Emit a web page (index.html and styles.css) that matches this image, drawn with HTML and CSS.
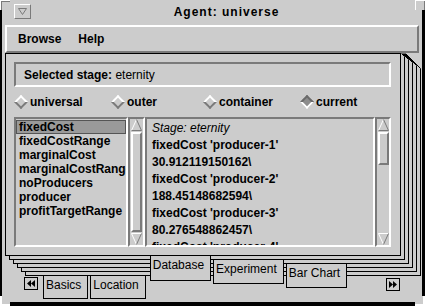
FILE: index.html
```html
<!DOCTYPE html>
<html lang="en">

<head>
    <meta charset="UTF-8">
    <meta name="viewport" content="width=device-width, initial-scale=1.0">
    <title>Agent: universe</title>
    <link rel="stylesheet" href="styles.css">
</head>

<body>

    <div class="window">
        <span class="corner corner-tl"></span>
        <span class="corner corner-tr"></span>
        <span class="corner corner-bl"></span>
        <span class="corner corner-br"></span>

        <div class="titlebar">
            <span class="win-button">
                <svg width="9" height="7" viewBox="0 0 9 7"><path d="M0.5 0.5 H8.5 L4.5 6.5 Z" fill="none" stroke="#7a7a7a"/></svg>
            </span>
            <span class="title">Agent: universe</span>
        </div>

        <div class="menubar">
            <span>Browse</span>
            <span>Help</span>
        </div>

        <div class="page">
            <!-- fanned corner of the pages stacked behind -->
            <svg class="page-fan" width="22" height="26" viewBox="0 0 22 26">
                <rect x="1" y="0" width="21" height="26" fill="#ccc"/>
                <path d="M0.5 0 V26" stroke="#000"/>
                <path d="M1.5 0.5 L4.5 3.5 V26 M2.5 0.5 L8.5 6.5 V26 M3.5 0.5 L12.5 9.5 V26 M4.5 0.5 L16.5 12.5 V26 M5.5 0.5 L20.5 15.5 V26" fill="none" stroke="#000"/>
            </svg>

            <div class="stage"><b>Selected stage:</b>&nbsp;eternity</div>

            <div class="radios">
                <label class="radio"><span class="diamond"></span>universal</label>
                <label class="radio"><span class="diamond"></span>outer</label>
                <label class="radio"><span class="diamond"></span>container</label>
                <label class="radio"><span class="diamond checked"></span>current</label>
            </div>

            <div class="panes">
                <ul class="list">
                    <li class="selected">fixedCost</li>
                    <li>fixedCostRange</li>
                    <li>marginalCost</li>
                    <li>marginalCostRange</li>
                    <li>noProducers</li>
                    <li>producer</li>
                    <li>profitTargetRange</li>
                </ul>
                <div class="scrollbar">
                    <svg class="arrow" width="11" height="12" viewBox="0 0 11 12"><path d="M5.5 0.5 L0.5 11.5" stroke="#fff"/><path d="M5.5 0.5 L10.5 11.5 H0.5" fill="none" stroke="#7a7a7a"/></svg>
                    <div class="slider slider-full"></div>
                    <svg class="arrow" width="11" height="12" viewBox="0 0 11 12"><path d="M0.5 0.5 H10.5 M0.5 0.5 L5.5 11.5" stroke="#fff" fill="none"/><path d="M10.5 0.5 L5.5 11.5" stroke="#7a7a7a"/></svg>
                </div>

                <div class="text">
                    <div class="caption">Stage: eternity</div>
                    <div>fixedCost 'producer-1'</div>
                    <div>30.912119150162\</div>
                    <div>fixedCost 'producer-2'</div>
                    <div>188.45148682594\</div>
                    <div>fixedCost 'producer-3'</div>
                    <div>80.276548862457\</div>
                    <div>fixedCost 'producer-4'</div>
                </div>
                <div class="scrollbar scrollbar-right">
                    <svg class="arrow" width="11" height="12" viewBox="0 0 11 12"><path d="M5.5 0.5 L0.5 11.5" stroke="#fff"/><path d="M5.5 0.5 L10.5 11.5 H0.5" fill="none" stroke="#7a7a7a"/></svg>
                    <div class="slider slider-top"></div>
                    <div class="trough"></div>
                    <svg class="arrow" width="11" height="12" viewBox="0 0 11 12"><path d="M0.5 0.5 H10.5 M0.5 0.5 L5.5 11.5" stroke="#fff" fill="none"/><path d="M10.5 0.5 L5.5 11.5" stroke="#7a7a7a"/></svg>
                </div>
            </div>
        </div>

        <div class="tabs">
            <span class="tab-scroll tab-scroll-left">
                <svg width="8" height="7" viewBox="0 0 8 7"><path d="M0 3.5 L4 0 V7 Z M4 3.5 L8 0 V7 Z" fill="#000"/></svg>
            </span>
            <span class="tab tab-back tab-basics">Basics</span>
            <span class="tab tab-back tab-location">Location</span>
            <span class="tab tab-front">Database</span>
            <span class="tab tab-layer1">Experiment</span>
            <span class="tab tab-layer2">Bar Chart</span>
            <span class="tab-scroll tab-scroll-right">
                <svg width="8" height="7" viewBox="0 0 8 7"><path d="M8 3.5 L4 0 V7 Z M4 3.5 L0 0 V7 Z" fill="#000"/></svg>
            </span>
        </div>
    </div>

</body>

</html>
```

FILE: styles.css
```css
/* Basic styling */
* {
    box-sizing: border-box;
}

body {
    font-family: 'Liberation Sans', Arial, sans-serif;
    font-size: 12px;
    background-color: #ccc;
    color: #000;
    margin: 0;
    padding: 0;
}

.window {
    position: relative;
    width: 425px;
    height: 306px;
    background-color: #ccc;
    border-left: 2px solid #000;
    border-right: 3px solid #000;
    border-bottom: 4px solid #000;
}

/* window manager corners */
.corner {
    position: absolute;
    width: 10px;
    height: 10px;
    background-color: #ccc;
}

.corner-tl {
    top: 0;
    left: -2px;
    border-top: 1px solid #fff;
    border-left: 1px solid #fff;
    box-shadow: inset 1px 1px 0 #7a7a7a;
}

.corner-tr {
    top: 0;
    right: -3px;
    border-top: 1px solid #fff;
    border-left: 1px solid #fff;
    box-shadow: inset -1px 0 0 #7a7a7a;
}

.corner-bl {
    bottom: -4px;
    left: -2px;
    border-left: 2px solid #fff;
    border-bottom: 2px solid #fff;
}

.corner-br {
    bottom: -4px;
    right: -3px;
    border-right: 2px solid #fff;
    border-bottom: 2px solid #fff;
}

/* title bar */
.titlebar {
    display: flex;
    align-items: center;
    height: 25px;
    padding-left: 12px;
    padding-bottom: 2px;
}

.win-button {
    width: 17px;
    height: 15px;
    display: flex;
    align-items: center;
    justify-content: center;
    border: 1px solid;
    border-color: #fff #7a7a7a #7a7a7a #fff;
}

.title {
    flex: 1;
    text-align: center;
    font-weight: bold;
    letter-spacing: 1px;
}

/* menu */
.menubar {
    display: flex;
    align-items: center;
    gap: 17px;
    height: 28px;
    margin: 0 3px;
    padding-left: 11px;
    border: 2px solid;
    border-color: #fff #7a7a7a #7a7a7a #fff;
    font-weight: bold;
}

/* notebook page, with the pages behind it */
.page {
    position: relative;
    width: 396px;
    height: 203px;
    margin-left: 3px;
    padding: 8px 9px 0 8px;
    border: 1px solid #000;
    box-shadow:
        4px 4px 0 -1px #ccc, 4px 4px 0 0 #000,
        8px 8px 0 -1px #ccc, 8px 8px 0 0 #000,
        12px 12px 0 -1px #ccc, 12px 12px 0 0 #000,
        16px 16px 0 -1px #ccc, 16px 16px 0 0 #000,
        20px 20px 0 -1px #ccc, 20px 20px 0 0 #000;
}

.page-fan {
    position: absolute;
    top: -1px;
    left: 394px;
    display: block;
}

.stage {
    display: flex;
    align-items: center;
    height: 25px;
    padding-left: 8px;
    border: 2px solid;
    border-color: #7a7a7a #fff #fff #7a7a7a;
}

.radios {
    display: grid;
    grid-template-columns: 97px 92px 97px 1fr;
    align-items: center;
    height: 30px;
}

.radio {
    display: flex;
    align-items: center;
    gap: 2px;
    font-weight: bold;
}

.diamond {
    width: 10px;
    height: 10px;
    margin: 0 2px;
    border: 2px solid;
    border-color: #fff #7a7a7a #7a7a7a #fff;
    transform: rotate(45deg);
}

.diamond.checked {
    background-color: #8c8c8c;
    border-color: #6a6a6a #fff #fff #6a6a6a;
}

.panes {
    display: flex;
    height: 130px;
}

.list {
    width: 114px;
    margin: 0;
    padding: 1px 0 0 0;
    list-style: none;
    overflow: hidden;
    white-space: nowrap;
    font-weight: bold;
    border: 2px solid;
    border-color: #7a7a7a #fff #fff #7a7a7a;
}

.list li {
    line-height: 12px;
    padding-left: 2px;
    border: 1px solid transparent;
}

.list li.selected {
    background-color: #9a9a9a;
    border-color: #555;
}

.scrollbar {
    width: 17px;
    display: flex;
    flex-direction: column;
    align-items: center;
    border: 2px solid;
    border-color: #7a7a7a #fff #fff #7a7a7a;
}

.scrollbar-right {
    width: 16px;
}

.arrow {
    display: block;
    flex: none;
}

.slider {
    width: 11px;
    margin: 1px 0;
    border: 2px solid;
    border-color: #fff #7a7a7a #7a7a7a #fff;
}

.slider-full {
    flex: 1;
}

.slider-top {
    height: 33px;
}

.trough {
    flex: 1;
}

.text {
    width: 230px;
    padding: 1px 0 0 5px;
    line-height: 17px;
    font-weight: bold;
    white-space: nowrap;
    overflow: hidden;
    border: 2px solid;
    border-color: #7a7a7a #fff #fff #7a7a7a;
}

.caption {
    font-style: italic;
    font-weight: normal;
}

/* tabs below the pages; they sit in front of the stacked page edges */
.tabs {
    position: relative;
    display: flex;
    align-items: flex-start;
    height: 44px;
    padding-left: 22px;
}

.tab {
    height: 24px;
    padding: 2px 6px 0 2px;
    line-height: 15px;
    background-color: #ccc;
    border: 1px solid #000;
    border-top: none;
}

.tab-back {
    margin-top: 20px;
    height: 23px;
}

.tab-basics {
    margin-left: 5px;
}

.tab-location {
    margin-left: 2px;
}

.tab-front {
    margin-left: 4px;
    height: 25px;
}

.tab-layer1 {
    margin-left: 2px;
    margin-top: 4px;
}

.tab-layer2 {
    margin-left: 2px;
    margin-top: 8px;
}

.tab-scroll {
    width: 14px;
    height: 13px;
    display: flex;
    align-items: center;
    justify-content: center;
    border: 1px solid #000;
}

.tab-scroll-left {
    margin-top: 21px;
}

.tab-scroll-right {
    margin-top: 22px;
    margin-left: auto;
    margin-right: 22px;
}
```
